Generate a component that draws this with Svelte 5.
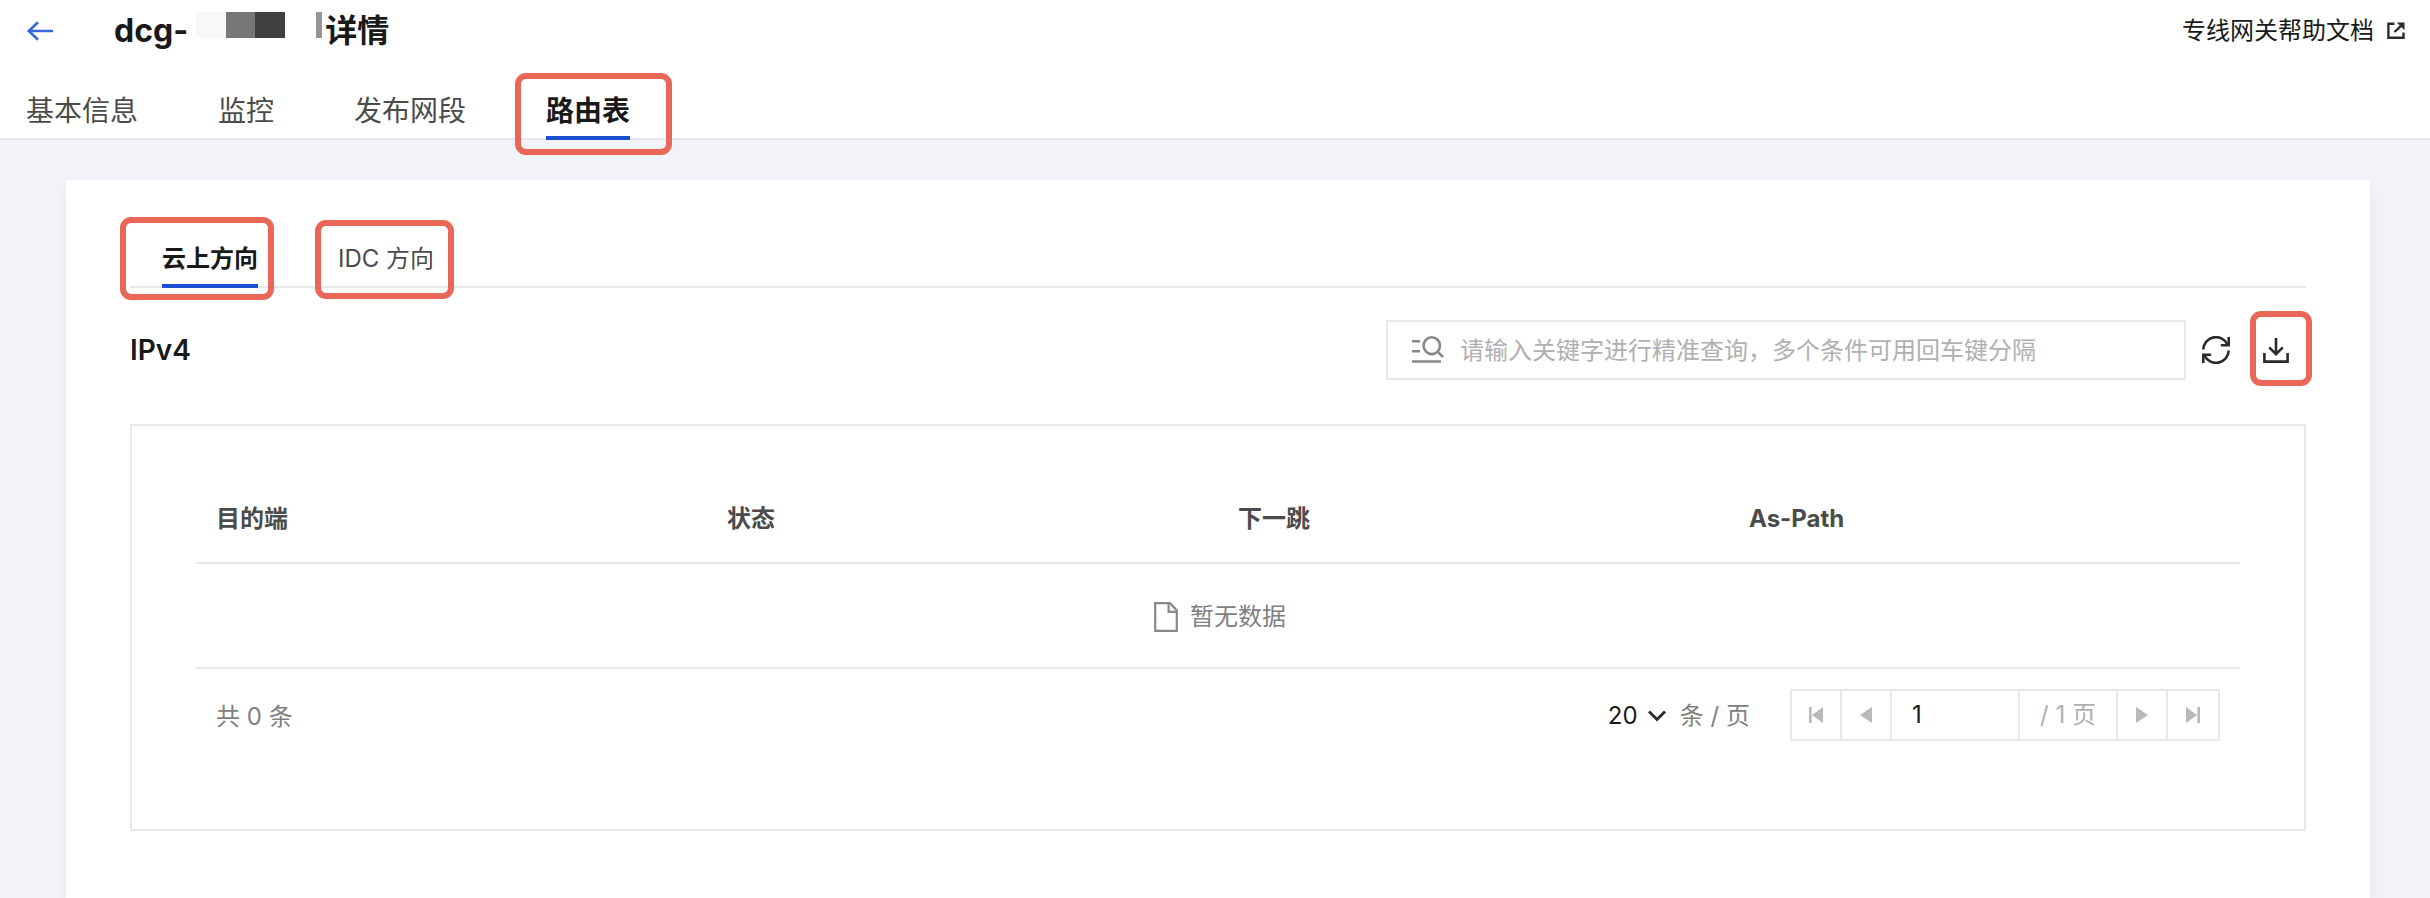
<script>
  const mainTabs = ['基本信息', '监控', '发布网段', '路由表'];
  const directions = ['云上方向', 'IDC 方向'];
  const columns = ['目的端', '状态', '下一跳', 'As-Path'];

  let activeTab = $state('路由表');
  let activeDirection = $state('云上方向');
  let keyword = $state('');
  let page = $state('1');
  let pageSize = $state('20');
</script>

<div class="page">
  <header class="header">
    <div class="title-row">
      <a class="back" href="#back" aria-label="返回">
        <svg width="28" height="20" viewBox="0 0 28 20" fill="none" stroke="#3567dd" stroke-width="2.6">
          <path d="M12 1.2 2.8 10 12 18.8M3 10H27" />
        </svg>
      </a>
      <h1>
        <span>dcg-</span>
        <svg class="masked" width="126" height="26" viewBox="0 0 126 26" shape-rendering="crispEdges">
          <rect width="30" height="26" fill="#f8f8f8" />
          <rect x="30" width="29" height="26" fill="#777777" />
          <rect x="59" width="30" height="26" fill="#404040" />
          <rect x="120" width="6" height="26" fill="#959595" />
        </svg>
        <span>详情</span>
      </h1>
      <a class="help" href="#help">
        专线网关帮助文档
        <svg width="18" height="18" viewBox="0 0 18 18" fill="none" stroke="#2b2b2b" stroke-width="2.4">
          <path d="M7.5 1.7H1.4V15.8H16.5V10.5M7.5 10 14 3.8" />
          <path d="M9.8 .6H17.5V8.3Z" fill="#2b2b2b" stroke="none" />
        </svg>
      </a>
    </div>
    <nav class="tabs main-tabs">
      {#each mainTabs as tab}
        <button class="tab" class:active={tab === activeTab} onclick={() => (activeTab = tab)}>
          {tab}
          {#if tab === '路由表'}<i class="mark mark-route"></i>{/if}
        </button>
      {/each}
    </nav>
  </header>

  <main class="card">
    <div class="tabs sub-tabs">
      {#each directions as tab, i}
        <button class="tab" class:active={tab === activeDirection} onclick={() => (activeDirection = tab)}>
          {tab}
          <i class="mark" class:mark-cloud={i === 0} class:mark-idc={i === 1}></i>
        </button>
      {/each}
    </div>

    <div class="toolbar">
      <h2>IPv4</h2>
      <label class="search">
        <svg width="32" height="28" viewBox="0 0 32 28" fill="none" stroke="#888888" stroke-width="2.6">
          <path d="M0 5.3H8M0 15.3H8M0 25.5H29" />
          <ellipse cx="19.8" cy="9.7" rx="8.2" ry="8.4" />
          <path d="M25.4 15.4 31 21" />
        </svg>
        <input type="text" bind:value={keyword} aria-label="搜索" placeholder="请输入关键字进行精准查询，多个条件可用回车键分隔" />
      </label>
      <button class="icon-button" aria-label="刷新">
        <svg width="28" height="28" viewBox="0 0 28 28" fill="none" stroke="#2b2b2b" stroke-width="2.6">
          <path d="M1.3 13.5A12.7 12.7 0 0 1 25.6 8.7M26.7 14.5A12.7 12.7 0 0 1 2.4 19.3" />
          <path d="M26.7 1V9.2H18.8M1.3 27V18.8H9.2" />
        </svg>
      </button>
      <button class="icon-button" aria-label="下载">
        <svg width="26" height="26" viewBox="0 0 26 26" fill="none" stroke="#2b2b2b" stroke-width="2.6">
          <path d="M13 1V17M6.2 10.4 13 17.2 19.8 10.4M1.4 16V24.6H24.6V16" />
        </svg>
        <i class="mark mark-download"></i>
      </button>
    </div>

    <section class="panel">
      <table>
        <thead>
          <tr>
            {#each columns as column}<th>{column}</th>{/each}
          </tr>
        </thead>
        <tbody>
          <tr>
            <td colspan={columns.length}>
              <div class="empty">
                <svg width="28" height="30" viewBox="-4 0 28 30" fill="none" stroke="#888888" stroke-width="2.2">
                  <path d="M1.2 1.2H16L22.8 8.4V28.8H1.2Z" />
                  <path d="M14.6 1.2V9.8H22.8" />
                </svg>
                暂无数据
              </div>
            </td>
          </tr>
        </tbody>
      </table>
      <footer class="footer">
        <span class="total">共 0 条</span>
        <label class="size">
          <span class="select-wrap">
            <select bind:value={pageSize} aria-label="每页条数">
              <option>20</option>
              <option>50</option>
            </select>
            <svg width="20" height="14" viewBox="0 0 20 14" fill="none" stroke="#2b2b2b" stroke-width="2.8">
              <path d="M2 2.5 10 10.5 18 2.5" />
            </svg>
          </span>
          条 / 页
        </label>
        <div class="pager">
          <button aria-label="首页">
            <svg width="16" height="16" viewBox="0 0 16 16" fill="#b8b8b8"><path d="M1 0H3.6V16H1ZM15 0V16L4 8Z" /></svg>
          </button>
          <button aria-label="上一页">
            <svg width="16" height="16" viewBox="0 0 16 16" fill="#b8b8b8"><path d="M14 0V16L2 8Z" /></svg>
          </button>
          <input type="text" bind:value={page} aria-label="页码" />
          <span class="pages">/ 1 页</span>
          <button aria-label="下一页">
            <svg width="16" height="16" viewBox="0 0 16 16" fill="#b8b8b8"><path d="M2 0V16L14 8Z" /></svg>
          </button>
          <button aria-label="末页">
            <svg width="16" height="16" viewBox="0 0 16 16" fill="#b8b8b8"><path d="M1 0V16L12 8ZM12.4 0H15V16H12.4Z" /></svg>
          </button>
        </div>
      </footer>
    </section>
  </main>
</div>

<style>
  :global(body) {
    background: #f2f3f8;
  }
  .page {
    display: flex;
    flex-direction: column;
    min-height: 100vh;
    overflow: hidden;
    color: #191919;
    font-family: Inter, 'Noto Sans CJK SC', sans-serif;
    font-size: 24px;
    line-height: 36px;
  }
  .page * {
    box-sizing: border-box;
  }
  button,
  input,
  select {
    margin: 0;
    padding: 0;
    border: 0;
    border-radius: 0;
    background: none;
    color: inherit;
    font: inherit;
  }
  button {
    cursor: pointer;
  }
  svg {
    display: block;
    flex: none;
  }
  a {
    color: inherit;
    text-decoration: none;
  }

  .header {
    border-bottom: 2px solid #e7e8ed;
    background: #fff;
  }
  .title-row {
    display: flex;
    align-items: center;
    padding: 12px 25px 0 26px;
  }
  h1,
  h2 {
    margin: 0;
    font-weight: 700;
  }
  h1 {
    display: flex;
    margin-left: 60px;
    font-size: 32px;
    line-height: 38px;
  }
  .masked {
    margin: 0 3px 0 8px;
  }
  .help {
    display: flex;
    align-items: center;
    gap: 13px;
    margin-left: auto;
  }

  .tabs {
    display: flex;
    gap: 80px;
  }
  .tab {
    position: relative;
    border-bottom: 4px solid transparent;
    color: #4b4b4b;
    white-space: nowrap;
  }
  .tab.active {
    border-color: #1e4fd0;
    color: #191919;
    font-weight: 700;
  }
  .main-tabs {
    margin: 43px 0 -2px;
    padding: 0 26px;
    font-size: 28px;
  }
  .main-tabs .tab {
    padding-bottom: 7px;
  }
  .sub-tabs {
    padding: 0 32px;
    border-bottom: 2px solid #e7e8ed;
  }
  .sub-tabs .tab {
    margin-bottom: -2px;
    padding-bottom: 7px;
  }

  .mark {
    position: absolute;
    z-index: 1;
    border: 6px solid #ea6656;
    border-radius: 11px;
    pointer-events: none;
  }
  .mark-route {
    inset: -20px -42px -19px -31px;
  }
  .mark-cloud {
    inset: -24px -16px -16px -42px;
  }
  .mark-idc {
    inset: -21px -20px -15px -23px;
  }
  .mark-download {
    inset: -26px -23px -23px -13px;
  }

  .card {
    flex: 1;
    margin: 40px 60px 0 66px;
    padding: 61px 64px 66px;
    background: #fff;
    box-shadow: 0 8px 12px rgba(54, 58, 80, 0.06);
  }
  .toolbar {
    display: flex;
    align-items: center;
    margin-top: 32px;
  }
  h2 {
    margin-right: auto;
    font-size: 28px;
    font-weight: 600;
  }
  .search {
    display: flex;
    align-items: center;
    gap: 16px;
    width: 800px;
    height: 60px;
    padding: 0 24px;
    border: 2px solid #e7e7ee;
  }
  .search input {
    flex: 1;
    min-width: 0;
    height: 36px;
    padding-top: 2px;
    outline: 0;
  }
  .search input::placeholder {
    color: #b0b0b0;
    opacity: 1;
  }
  .icon-button {
    position: relative;
    margin-left: 16px;
  }
  .icon-button:last-child {
    margin: 0 17px 0 33px;
  }

  .panel {
    margin-top: 44px;
    padding: 64px;
    border: 2px solid #e7e7ee;
  }
  table {
    width: 100%;
    border-collapse: separate;
    border-spacing: 0;
    table-layout: fixed;
  }
  th,
  td {
    border-bottom: 2px solid #e7e7ee;
  }
  th {
    padding: 11px 20px 25px;
    color: #4b4b4b;
    font-weight: 700;
    text-align: left;
  }
  td {
    padding: 35px 20px 32px;
  }
  .empty {
    display: flex;
    align-items: center;
    justify-content: center;
    gap: 12px;
    color: #808080;
  }

  .footer {
    display: flex;
    align-items: center;
    padding: 20px 20px 24px;
    color: #808080;
  }
  .total {
    margin-right: auto;
    padding-top: 4px;
  }
  .size {
    display: flex;
    gap: 13px;
    margin-right: 40px;
    padding-top: 1px;
  }
  .select-wrap {
    display: grid;
    align-items: center;
    color: #191919;
  }
  .select-wrap > * {
    grid-area: 1 / 1;
  }
  .select-wrap svg {
    justify-self: end;
    pointer-events: none;
  }
  select {
    width: 59px;
    appearance: none;
  }
  .pager {
    display: flex;
    height: 52px;
    border: 2px solid #e7e7ee;
  }
  .pager > * {
    display: flex;
    align-items: center;
    justify-content: center;
    width: 50px;
    border-right: 2px solid #e7e7ee;
  }
  .pager > :last-child {
    border-right: 0;
  }
  .pager input {
    width: 128px;
    padding: 0 20px;
    color: #191919;
    outline: 0;
  }
  .pager .pages {
    width: 98px;
    color: #b0b0b0;
  }
</style>
